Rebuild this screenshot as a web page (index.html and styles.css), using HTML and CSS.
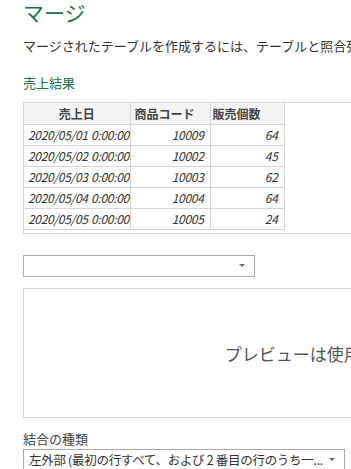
FILE: index.html
```html
<!DOCTYPE html>
<html lang="ja">
<head>
    <meta charset="UTF-8">
    <title>マージ</title>
    <link rel="stylesheet" href="styles.css">
</head>
<body>
    <div class="dialog">
        <h1 class="title">マージ</h1>
        <p class="desc">マージされたテーブルを作成するには、テーブルと照合列を選択してください。</p>

        <div class="section-label">売上結果</div>
        <div class="table-wrap">
            <table class="grid">
                <colgroup>
                    <col class="c1">
                    <col class="c2">
                    <col class="c3">
                </colgroup>
                <thead>
                    <tr>
                        <th class="center">売上日</th>
                        <th>商品コード</th>
                        <th class="tight">販売個数</th>
                    </tr>
                </thead>
                <tbody>
                    <tr><td>2020/05/01 0:00:00</td><td class="num">10009</td><td class="num">64</td></tr>
                    <tr><td>2020/05/02 0:00:00</td><td class="num">10002</td><td class="num">45</td></tr>
                    <tr><td>2020/05/03 0:00:00</td><td class="num">10003</td><td class="num">62</td></tr>
                    <tr><td>2020/05/04 0:00:00</td><td class="num">10004</td><td class="num">64</td></tr>
                    <tr><td>2020/05/05 0:00:00</td><td class="num">10005</td><td class="num">24</td></tr>
                </tbody>
            </table>
        </div>

        <div class="select select-table"><span class="arrow"></span></div>

        <div class="preview">
            <span>プレビューは使用できません</span>
        </div>

        <div class="field-label">結合の種類</div>
        <div class="select select-join">
            <span class="select-text">左外部 (最初の行すべて、および 2 番目の行のうち一...</span>
            <span class="arrow"></span>
        </div>
    </div>
</body>
</html>
```

FILE: styles.css
```css
html, body {
    margin: 0;
    padding: 0;
    background: #ffffff;
    overflow: hidden;
}

body {
    font-family: "Noto Sans CJK JP", "Noto Sans", sans-serif;
    color: #333333;
    width: 351px;
    height: 469px;
}

.dialog {
    padding-left: 23px;
    width: 700px;
}

.title {
    margin: 0;
    font-size: 21px;
    font-weight: normal;
    line-height: 24px;
    color: #217346;
}

.desc {
    margin: 13px 0 0 0;
    font-size: 13px;
    line-height: 18px;
    white-space: nowrap;
    color: #333333;
}

.section-label {
    margin-top: 19px;
    font-size: 13px;
    line-height: 18px;
    color: #217346;
}

/* preview grid */
.table-wrap {
    margin-top: 10px;
    width: 640px;
    height: 130px;
    border: 1px solid #d6d6d6;
    border-right: none;
}

.grid {
    border-collapse: collapse;
    table-layout: fixed;
    width: 260px;
    font-size: 12px;
}

.c1 { width: 106px; }
.c2 { width: 80px; }
.c3 { width: 74px; }

.grid tr { height: 21px; }

.grid th,
.grid td {
    border: 1px solid #d6d6d6;
    padding: 0 4px;
    line-height: 19px;
    white-space: nowrap;
    overflow: hidden;
}

.grid tr:first-child th { border-top: none; }
.grid th:first-child,
.grid td:first-child { border-left: none; }

.grid th {
    background: #f3f3f3;
    font-weight: bold;
    text-align: left;
    color: #444444;
}

.grid th.center { text-align: center; }
.grid th.tight { padding-left: 2px; }

.grid td {
    font-style: italic;
    letter-spacing: -0.3px;
    word-spacing: 1px;
    color: #333333;
}

.grid td.num { text-align: right; padding-right: 6px; }

/* drop downs */
.select {
    position: relative;
    box-sizing: border-box;
    height: 22px;
    border: 1px solid #ababab;
    background: #ffffff;
}

.select-table {
    margin-top: 21px;
    width: 232px;
}

.select-join {
    margin-top: 1px;
    width: 322px;
    font-size: 12.5px;
    line-height: 20px;
}

.select-text {
    padding-left: 5px;
    white-space: nowrap;
    letter-spacing: -0.3px;
    color: #333333;
}

.arrow {
    position: absolute;
    right: 9px;
    top: 8px;
    width: 0;
    height: 0;
    border-left: 3px solid transparent;
    border-right: 3px solid transparent;
    border-top: 3px solid #666666;
}

.preview {
    margin-top: 11px;
    width: 622px;
    height: 128px;
    border: 1px solid #d6d6d6;
    border-right: none;
    display: flex;
    align-items: center;
    justify-content: center;
    font-size: 17px;
    color: #555555;
}

.field-label {
    margin-top: 12px;
    font-size: 13px;
    line-height: 18px;
    color: #444444;
}
```
